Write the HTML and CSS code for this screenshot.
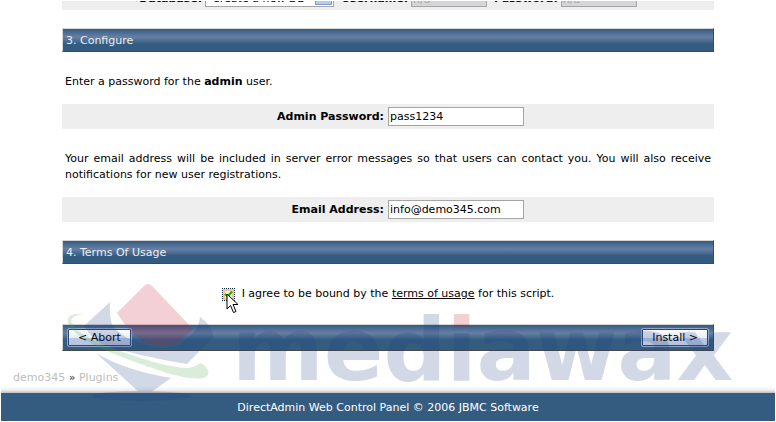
FILE: index.html
```html
<!DOCTYPE html>
<html lang="en">
<head>
<meta charset="utf-8">
<title>DirectAdmin Plugins</title>
<link rel="stylesheet" href="styles.css">
</head>
<body>
<div class="page">
  <form class="installer">
    <div class="db-row">
      <label for="db">Database:</label>
      <select id="db" class="field db-select"><option>Create a new DB</option></select>
      <label for="user">Username:</label>
      <input id="user" class="field db-input" value="n/a" disabled>
      <label for="pass">Password:</label>
      <input id="pass" class="field db-input" value="n/a" disabled>
    </div>

    <h2 class="bar heading">3. Configure</h2>
    <p class="note">Enter a password for the <b>admin</b> user.</p>
    <div class="form-row">
      <label for="admin-pass">Admin Password:</label>
      <input id="admin-pass" class="field" type="text" value="pass1234">
    </div>
    <p class="note">Your email address will be included in server error messages so that users can contact you. You will also receive notifications for new user registrations.</p>
    <div class="form-row">
      <label for="email">Email Address:</label>
      <input id="email" class="field" type="email" value="info@demo345.com">
    </div>

    <h2 class="bar heading">4. Terms Of Usage</h2>
    <div class="agree">
      <span class="tick-box">
        <input id="agree" type="checkbox" checked>
        <svg class="tick" width="13" height="13" viewBox="0 0 13 13"><path d="M3 6L5.500 8.500L10 3.500" fill="none" stroke="#21a121" stroke-width="2"/></svg>
        <svg class="pointer" width="13" height="21" viewBox="0 0 13 21"><path d="M1 1V16L4.500 12.500L7.500 19.500L10 18.500L7 11.500H12Z" fill="#fff" stroke="#000"/></svg>
      </span>
      <label for="agree">I agree to be bound by the <a href="#terms">terms of usage</a> for this script.</label>
    </div>
    <div class="bar actions">
      <button type="button">&lt; Abort</button>
      <button type="submit">Install &gt;</button>
    </div>
  </form>

  <nav class="crumbs"><a href="#home">demo345</a> <span>»</span> <a href="#plugins">Plugins</a></nav>
  <footer class="footer">DirectAdmin Web Control Panel © 2006 JBMC Software</footer>

  <svg class="watermark" width="700" height="140" viewBox="60 280 700 140">
    <defs>
      <linearGradient id="dot" gradientUnits="userSpaceOnUse" x1="0" y1="300" x2="0" y2="380">
        <stop offset="0.350" stop-color="#c01835"/><stop offset="0.350" stop-color="#23407f"/>
      </linearGradient>
    </defs>
    <g class="navy">
      <path d="M110 302L84 326Q91 337 101 344Q138 356 187 364L213 337Q214 327 200 317Q199 327 194 332L181 344Q171 348 160 347Q127 344 112 325Q109 314 110 302Z"/>
      <path d="M96 353Q124 370 171 378L150 393Q145 399 140 393Z"/>
      <ellipse cx="141" cy="396" rx="49" ry="5"/>
    </g>
    <path class="red" d="M117 313L144 286Q148 282 152 286L193 329L178 342Q166 349 153 345Q132 338 117 313Z"/>
    <path class="green" d="M85 315C76 314 69 318 72 323C80 336 101 345 120 351C145 360 172 368 188 368Q196 367 200 363Q210 367 208 375C203 382 181 377 167 373C138 363 75 343 68 323C66 316 73 312 85 315Z"/>
    <text class="wordmark" x="232" y="380">med<tspan fill="url(#dot)">i</tspan>awax</text>
  </svg>
</div>
</body>
</html>
```
FILE: styles.css
```css
* { box-sizing: border-box; }

body {
  margin: 0;
  background: #fff;
  color: #000;
  font: 11px/16px "DejaVu Sans", Verdana, sans-serif;
}

.page { position: relative; padding: 1px; }
.installer { margin: 0 61px; }

.field {
  height: 19px;
  margin: 0;
  padding: 0 1px;
  border: 1px solid #a5a5a5;
  border-radius: 0;
  background: #fff;
  color: #000;
  font: inherit;
}

.db-row {
  display: flex;
  justify-content: center;
  align-items: flex-end;
  gap: 3px;
  height: 9px;
  padding-bottom: 3px;
  overflow: hidden;
  background: #eee;
  font-weight: bold;
}
.db-row .field { flex: none; padding-top: 3px; font-weight: normal; }
.db-row .db-select {
  appearance: none;
  width: 129px;
  margin-right: 4px;
  padding: 2px 18px 0 6px;
  background: linear-gradient(#c3d5ee, #b4cce8) right 2px top 1px / 15px 14px no-repeat, linear-gradient(#7d9cc4, #7d9cc4) right 1px top 0 / 17px 16px no-repeat, #fff;
}
.db-input { width: 76px; }
.db-input:disabled { margin-right: 4px; background: #d4d5d9; color: #aaa; }
.db-input:last-child { margin-right: 0; }

.bar {
  border: 1px solid #474747;
  border-top-color: #d5d5d5;
  border-left-color: #d5d5d5;
  background: linear-gradient(#335c82, #6780a5 8px, #335c80 15px);
}

.heading {
  margin: 18px 0 0;
  padding: 4px 3px 2px;
  color: #eee;
  font-size: 11px;
  font-weight: normal;
  line-height: 16px;
}

.note {
  margin: 22px 3px 14px;
  text-align: justify;
}

.form-row {
  display: grid;
  grid-template-columns: 1fr 1fr;
  align-items: center;
  padding: 3px 0;
  background: #eee;
}
.form-row label { padding-right: 4px; text-align: right; font-weight: bold; }
.form-row .field { width: 136px; }

.agree {
  display: flex;
  justify-content: center;
  align-items: center;
  gap: 7px;
  margin: 22px 0;
}
.agree a { color: inherit; }
.tick-box { position: relative; height: 13px; }
.tick-box input {
  display: block;
  appearance: none;
  width: 13px;
  height: 13px;
  margin: 0;
  border: 1px dotted #102850;
  background: #f5f8ef;
  box-shadow: inset 0 0 0 2px #f8c872;
}
.tick { position: absolute; left: 0; top: 0; pointer-events: none; }
.pointer { position: absolute; left: 4px; top: 5px; pointer-events: none; }

.actions {
  display: flex;
  justify-content: space-between;
  padding: 3px 4px;
}
.actions button {
  height: 19px;
  padding: 0 10px;
  border: 1px solid #8fa5c9;
  border-radius: 2px;
  background: linear-gradient(#fff, #e9edf7 50%, #bdcae3 51%, #b4c3df);
  box-shadow: inset 0 0 0 1px #26477e;
  color: #000;
  font: inherit;
}

.crumbs { margin: 19px 12px 0; color: #20305c; }
.crumbs a { color: #bdbdbd; text-decoration: none; }

.footer {
  padding: 14px 0 5px;
  background: linear-gradient(#fff, #f0f0f0 4px, #bfbfbf 7px, #335c80 7px);
  color: #fff;
  text-align: center;
}

.watermark {
  position: absolute;
  left: 60px;
  top: 280px;
  pointer-events: none;
  opacity: 0.2;
}
.navy, .wordmark { fill: #23407f; }
.red { fill: #c01835; }
.green { fill: #45aa45; }
.wordmark { font-family: "DejaVu Sans", sans-serif; font-size: 88px; font-weight: bold; }
```
